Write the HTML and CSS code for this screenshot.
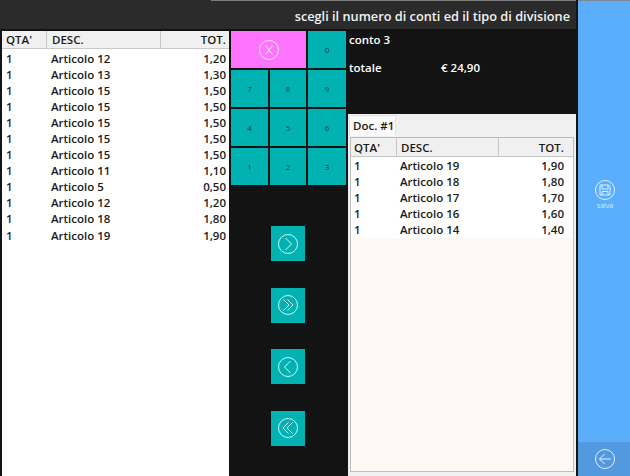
FILE: index.html
```html
<!DOCTYPE html>
<html lang="it">
<head>
  <meta charset="UTF-8" />
  <title>Divisione conto</title>
  <link rel="stylesheet" href="styles.css">
</head>
<body>
  <div class="main">
    <div class="top-line"></div>
    <header class="title-bar">scegli il numero di conti ed il tipo di divisione</header>
    <div class="content">
      <div class="grid-list left-list">
        <div class="row head">
          <span class="qta">QTA'</span><span class="desc">DESC.</span><span class="tot">TOT.</span>
        </div>
        <div class="row"><span class="qta">1</span><span class="desc">Articolo 12</span><span class="tot">1,20</span></div>
        <div class="row"><span class="qta">1</span><span class="desc">Articolo 13</span><span class="tot">1,30</span></div>
        <div class="row"><span class="qta">1</span><span class="desc">Articolo 15</span><span class="tot">1,50</span></div>
        <div class="row"><span class="qta">1</span><span class="desc">Articolo 15</span><span class="tot">1,50</span></div>
        <div class="row"><span class="qta">1</span><span class="desc">Articolo 15</span><span class="tot">1,50</span></div>
        <div class="row"><span class="qta">1</span><span class="desc">Articolo 15</span><span class="tot">1,50</span></div>
        <div class="row"><span class="qta">1</span><span class="desc">Articolo 15</span><span class="tot">1,50</span></div>
        <div class="row"><span class="qta">1</span><span class="desc">Articolo 11</span><span class="tot">1,10</span></div>
        <div class="row"><span class="qta">1</span><span class="desc">Articolo 5</span><span class="tot">0,50</span></div>
        <div class="row"><span class="qta">1</span><span class="desc">Articolo 12</span><span class="tot">1,20</span></div>
        <div class="row"><span class="qta">1</span><span class="desc">Articolo 18</span><span class="tot">1,80</span></div>
        <div class="row"><span class="qta">1</span><span class="desc">Articolo 19</span><span class="tot">1,90</span></div>
      </div>

      <div class="middle">
        <div class="keypad">
          <button class="key clear">
            <svg class="icon" viewBox="0 0 22 22"><circle cx="11" cy="11" r="9.5"/><path d="M7.5 6.5 14.5 15.5M14.5 6.5 7.5 15.5"/></svg>
          </button>
          <button class="key">0</button>
          <button class="key">7</button>
          <button class="key">8</button>
          <button class="key">9</button>
          <button class="key">4</button>
          <button class="key">5</button>
          <button class="key">6</button>
          <button class="key">1</button>
          <button class="key">2</button>
          <button class="key">3</button>
        </div>
        <div class="moves">
          <button class="move"><svg class="icon" viewBox="0 0 22 22"><circle cx="11" cy="11" r="9.5"/><path d="M8.5 5 14.5 11 8.5 17"/></svg></button>
          <button class="move"><svg class="icon" viewBox="0 0 22 22"><circle cx="11" cy="11" r="9.5"/><path d="M6.5 5.5 12 11 6.5 16.5M10.5 5.5 16 11 10.5 16.5"/></svg></button>
          <button class="move"><svg class="icon" viewBox="0 0 22 22"><circle cx="11" cy="11" r="9.5"/><path d="M13.5 5 7.5 11 13.5 17"/></svg></button>
          <button class="move"><svg class="icon" viewBox="0 0 22 22"><circle cx="11" cy="11" r="9.5"/><path d="M15.5 5.5 10 11 15.5 16.5M11.5 5.5 6 11 11.5 16.5"/></svg></button>
        </div>
      </div>

      <div class="doc-side">
        <div class="summary">
          <div class="conto">conto 3</div>
          <div class="totale"><span class="totale-label">totale</span><span>€ 24,90</span></div>
        </div>
        <div class="tabs">
          <div class="tab-strip"><span class="tab">Doc. #1</span></div>
          <div class="grid-list doc-list">
            <div class="row head">
              <span class="qta">QTA'</span><span class="desc">DESC.</span><span class="tot">TOT.</span>
            </div>
            <div class="row"><span class="qta">1</span><span class="desc">Articolo 19</span><span class="tot">1,90</span></div>
            <div class="row"><span class="qta">1</span><span class="desc">Articolo 18</span><span class="tot">1,80</span></div>
            <div class="row"><span class="qta">1</span><span class="desc">Articolo 17</span><span class="tot">1,70</span></div>
            <div class="row"><span class="qta">1</span><span class="desc">Articolo 16</span><span class="tot">1,60</span></div>
            <div class="row"><span class="qta">1</span><span class="desc">Articolo 14</span><span class="tot">1,40</span></div>
          </div>
        </div>
      </div>
    </div>
  </div>

  <aside class="sidebar">
    <button class="save">
      <svg class="icon" viewBox="0 0 22 22"><circle cx="11" cy="11" r="9.5"/><path d="M6 6H14.5L16 7.5V16H6ZM8 6V10H14V6M8 16V12.5H14V16"/></svg>
      <span>salva</span>
    </button>
    <button class="back">
      <svg class="icon" viewBox="0 0 22 22"><circle cx="11" cy="11" r="9.5"/><path d="M10.5 6 5.5 11 10.5 16M5.5 11H17"/></svg>
    </button>
  </aside>
</body>
</html>
```

FILE: styles.css
```css
* { box-sizing: border-box; }
html, body { height: 100%; }
body {
  margin: 0; width: 630px; height: 476px; overflow: hidden;
  display: flex; background-color: #131313; color: #fff;
  font-family: "Open Sans", sans-serif; font-size: 11.5px; font-weight: 600;
}
button { border: none; padding: 0; font-family: inherit; }

.main {
  width: 576px; display: flex; flex-direction: column;
  background: linear-gradient(#2b2b2b 1px, transparent 1px);
}
.top-line { height: 1px; margin-left: 211px; background-color: #7d7d7d; flex: none; }
.title-bar {
  height: 28px; background-color: #2b2b2b; color: #f2f2f2; flex: none;
  text-align: right; padding: 7px 6px 0 0; font-size: 12.75px; line-height: 17px;
  margin-bottom: 2px; white-space: nowrap;
}
.content { flex: 1; display: flex; padding-left: 2px; }

.grid-list { background-color: #fff; color: #1a1a1a; }
.row { display: flex; height: 16.05px; line-height: 16px; }
.row .qta { color: #10204a; }
.head {
  height: 18px; line-height: 17px; margin-bottom: 2px; color: #1a1a1a;
  background-color: #f0f0f0; border-bottom: 1px solid #c8c8c8;
}
.head .qta { color: #1a1a1a; }
.qta { padding-left: 4px; }
.desc { padding-left: 5px; }
.tot { flex: 1; text-align: right; padding-right: 3px; }
.head .desc, .head .tot { border-left: 1px solid #c8c8c8; }

.left-list { width: 227px; }
.left-list .qta { width: 44px; }
.left-list .desc { width: 114px; }

.middle { width: 115px; margin: 0 2px; }
.keypad {
  display: grid; grid-template-columns: 37px 36px 38px;
  grid-auto-rows: 37px; gap: 2px;
}
.key { background-color: #00b2b2; color: #083c40; font-size: 8px; font-weight: 400; }
.clear {
  grid-column: span 2; background-color: #ff74ff;
  display: flex; align-items: center; justify-content: center;
}
.moves {
  display: flex; flex-direction: column; align-items: center; gap: 26.6px;
  margin-top: 41px; padding-right: 1px;
}
.move {
  width: 34px; height: 35px; background-color: #00b2b2;
  display: flex; align-items: center; justify-content: center;
}
.icon { width: 22px; height: 22px; fill: none; stroke: #d8f4f4; stroke-width: 1; display: block; }
.clear .icon { stroke: #fff0ff; }

.doc-side { flex: 1; display: flex; flex-direction: column; }
.summary { height: 83px; padding-left: 1px; }
.conto { line-height: 18px; }
.totale { display: flex; margin-top: 10px; line-height: 18px; }
.totale-label { width: 92px; }

.tabs {
  width: 228px; height: 362px; background-color: #f0f0f0;
  padding: 1px 2px 4px; display: flex; flex-direction: column;
}
.tab-strip { height: 22px; margin-left: -1px; }
.tab {
  display: inline-block; height: 21px; width: 47px; padding-left: 3px; line-height: 20px;
  background-color: #fafafa; color: #1a1a1a; border: 1px solid #e2e2e2; border-bottom: none;
  white-space: nowrap;
}
.doc-list { flex: 1; background-color: #fdf8f5; border: 1px solid #bdbdbd; }
.doc-list .head { height: 19px; line-height: 19px; margin-bottom: 1px; }
.doc-list .row:not(.head) { background-color: #fff; }
.doc-list .qta { width: 45px; padding-left: 3px; }
.doc-list .desc { width: 102px; padding-left: 4px; }
.doc-list .tot { padding-right: 9px; }

.sidebar {
  flex: 1; margin-left: 2px; background-color: #5aaefc; border-top: 1px solid #7d8a96;
  display: flex; flex-direction: column; align-items: stretch; justify-content: flex-end;
}
.save {
  background: none; color: #d5ebff; font-size: 7px; font-weight: 400;
  display: flex; flex-direction: column; align-items: center;
  margin-bottom: 232px; padding-left: 2px;
}
.save span { line-height: 9px; }
.back {
  height: 34px; background-color: #5299e0; padding-left: 2px;
  display: flex; align-items: center; justify-content: center;
}
.sidebar .icon { stroke: #e2f1ff; }
```
